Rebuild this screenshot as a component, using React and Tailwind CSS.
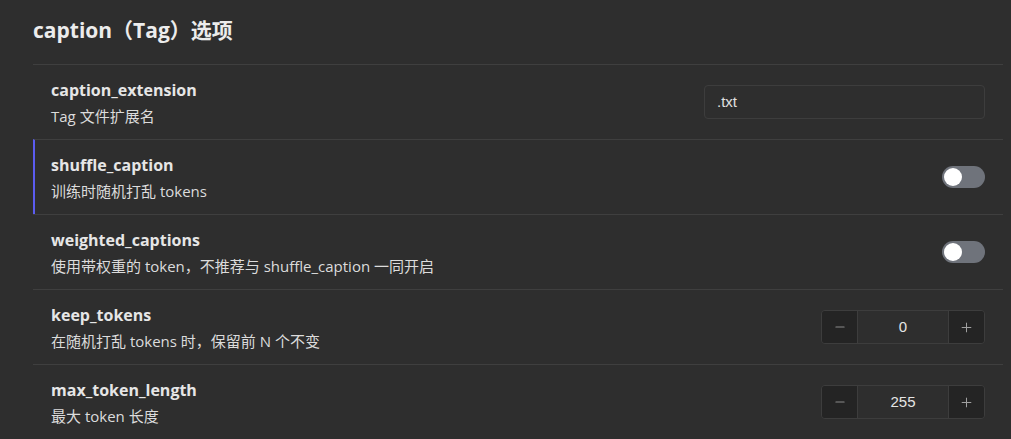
import { Minus, Plus } from "lucide-react";

const font = { fontFamily: '"Open Sans", "Noto Sans CJK SC", sans-serif' };

function Toggle() {
  return (
    <div className="w-[43px] h-[22px] rounded-full bg-[#6f737b] flex items-center px-[2px]">
      <div className="w-[18px] h-[18px] rounded-full bg-white" />
    </div>
  );
}

function NumberBox({ value }) {
  return (
    <div className="flex h-[34px] w-[164px] rounded-[4px] border border-[#3d3d3d] overflow-hidden">
      <button className="w-[36px] flex items-center justify-center bg-[#242424] border-r border-[#3d3d3d] text-[#8a8a8a]">
        <Minus size={14} strokeWidth={2} />
      </button>
      <div className="flex-1 flex items-center justify-center text-[15px] text-[#e5e5e5] font-['Liberation_Sans',sans-serif]">
        {value}
      </div>
      <button className="w-[36px] flex items-center justify-center bg-[#242424] border-l border-[#3d3d3d] text-[#a0a0a0]">
        <Plus size={15} strokeWidth={1.6} />
      </button>
    </div>
  );
}

function Row({ name, desc, active, children }) {
  return (
    <div
      className={
        "flex items-center justify-between h-[75px] border-t border-[#3f3f3f] pr-[18px] " +
        (active ? "border-l-2 border-l-[#5b5cf0] pl-[16px]" : "pl-[18px]")
      }
    >
      <div className="flex flex-col">
        <div className="h-[24px] text-[16px] leading-[24px] font-bold text-[#e6e6e6] whitespace-nowrap">{name}</div>
        <div className="h-[20px] mt-[4px] text-[15px] leading-[20px] text-[#dcdcdc] whitespace-nowrap">{desc}</div>
      </div>
      {children}
    </div>
  );
}

export default function App() {
  return (
    <div className="min-h-screen bg-[#2e2e2e] pl-[33px] pr-[8px] pt-[16px]" style={font}>
      <h2 className="h-[28px] text-[21px] leading-[28px] font-bold text-[#ececec] mb-[20px]">caption（Tag）选项</h2>
      <div className="border-b border-[#3f3f3f]">
        <Row name="caption_extension" desc="Tag 文件扩展名">
          <div className="w-[281px] h-[34px] rounded-[4px] border border-[#3d3d3d] flex items-center px-[12px] text-[15px] text-[#e0e0e0] font-['Liberation_Sans',sans-serif]">
            .txt
          </div>
        </Row>
        <Row name="shuffle_caption" desc="训练时随机打乱 tokens" active>
          <Toggle />
        </Row>
        <Row name="weighted_captions" desc="使用带权重的 token，不推荐与 shuffle_caption 一同开启">
          <Toggle />
        </Row>
        <Row name="keep_tokens" desc="在随机打乱 tokens 时，保留前 N 个不变">
          <NumberBox value="0" />
        </Row>
        <Row name="max_token_length" desc="最大 token 长度">
          <NumberBox value="255" />
        </Row>
      </div>
    </div>
  );
}
